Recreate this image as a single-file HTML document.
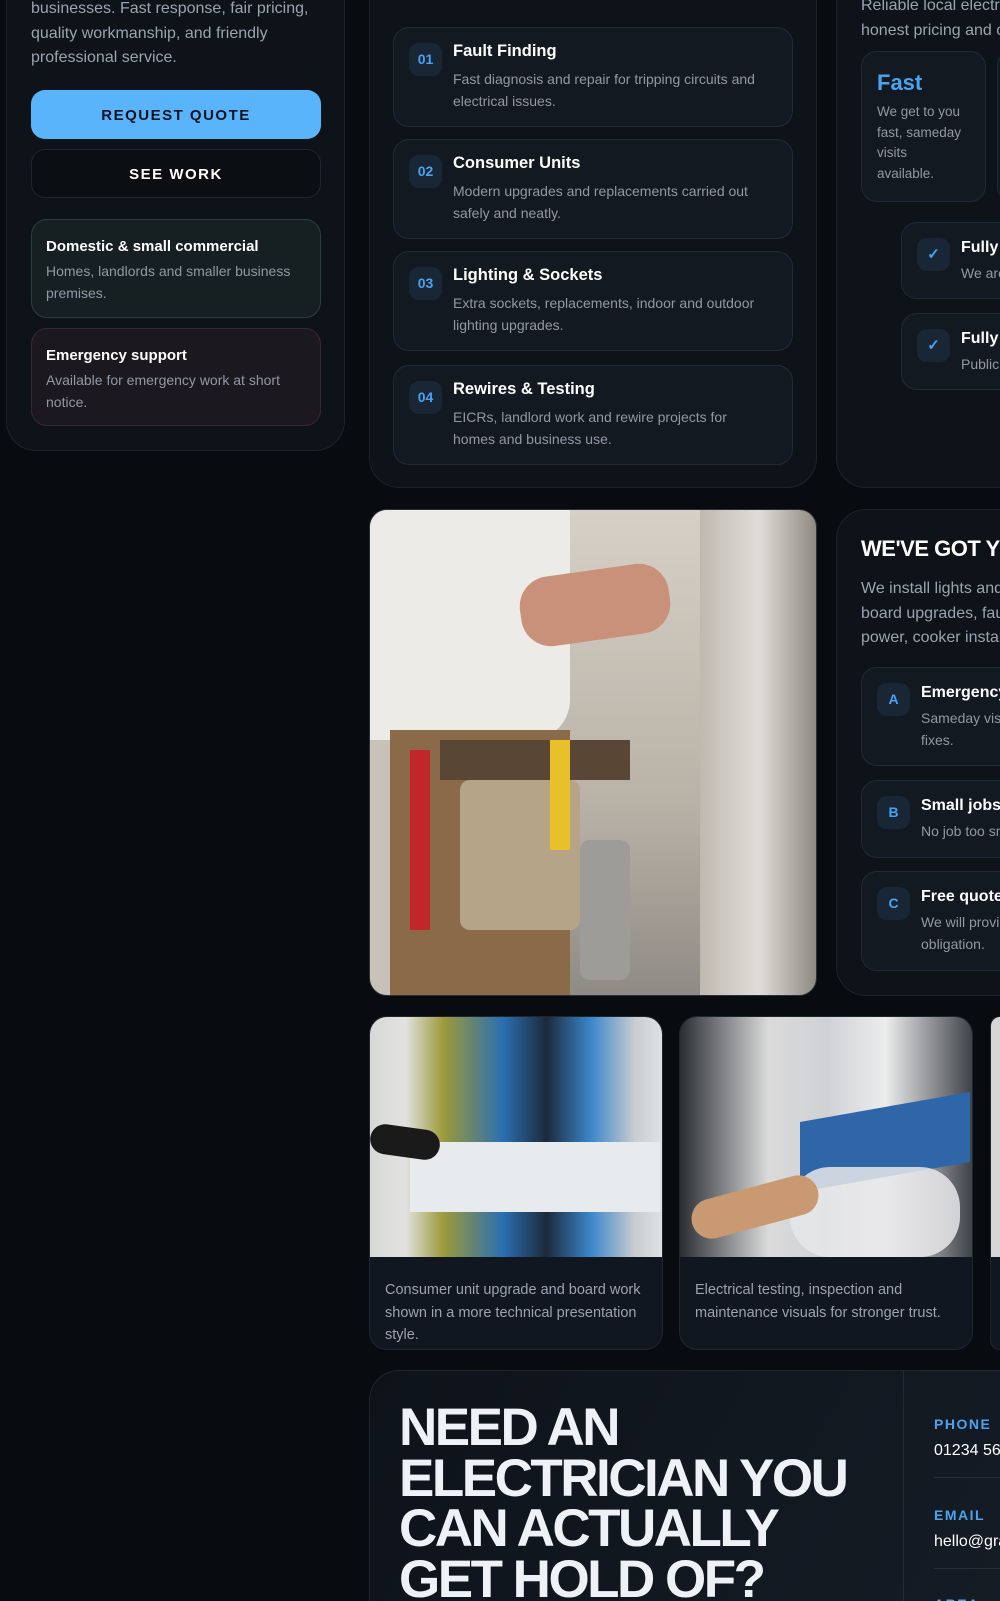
<!DOCTYPE html>
<html><head><meta charset="utf-8"><style>
*{margin:0;padding:0;box-sizing:border-box}
html,body{width:1000px;height:1601px;overflow:hidden;background:#080b10}
body{font-family:"Liberation Sans",Arial,sans-serif;position:relative;color:#fff}
#wrap{position:absolute;left:0;top:0;width:1000px;height:1601px;overflow:hidden}
.a{position:absolute}
.panel{position:absolute;background:#0e1319;border:1px solid #1c232c;border-radius:30px}
.p{color:#9aa3ae;font-size:16px;line-height:24.5px}
.btn{position:absolute;border-radius:14px;text-align:center;font-weight:900;font-size:15px;letter-spacing:1.5px}
.card{position:absolute;border-radius:16px;border:1px solid #222a34;background:#131921;overflow:hidden}
.card h4{font-size:15.5px;font-weight:700;color:#fff;margin-bottom:6px;white-space:nowrap}
.card p{font-size:14px;line-height:21.5px;color:#8f99a5}
.badge{position:absolute;width:33px;height:33px;border-radius:10px;background:#182635;color:#4aa3f0;font-weight:900;font-size:14px;text-align:center;line-height:33px}
.svc h4{position:absolute;left:59px;top:14px;font-size:16.5px}
.svc p{position:absolute;left:59px;top:41px;width:310px}
.gal{position:absolute;top:1016px;width:294px;height:334px;border-radius:18px;overflow:hidden;background:#111720;border:1px solid #1f2630}
.gal .cap{position:absolute;left:15px;top:262px;width:270px;font-size:14.5px;line-height:22.5px;color:#9aa3ae}
</style></head><body><div id="wrap">

<div class="panel" style="left:6px;top:-40px;width:339px;height:491px"></div>
<div class="a p" style="left:31px;top:-3px;width:300px">businesses. Fast response, fair pricing, quality workmanship, and friendly professional service.</div>
<div class="btn" style="left:31px;top:90px;width:290px;height:49px;background:#5ab4fb;color:#0a1320;line-height:51px">REQUEST QUOTE</div>
<div class="btn" style="left:31px;top:149px;width:290px;height:49px;border:1px solid #1f2630;background:#0b0f14;color:#fff;line-height:49px">SEE WORK</div>
<div class="card" style="left:31px;top:219px;width:290px;height:99px;background:#162022;border-color:#28403a">
<h4 style="position:absolute;left:14px;top:18px;font-size:15px">Domestic &amp; small commercial</h4>
<p style="position:absolute;left:14px;top:41px;width:265px">Homes, landlords and smaller business premises.</p></div>
<div class="card" style="left:31px;top:328px;width:290px;height:98px;background:#1c1820;border-color:#3e2630">
<h4 style="position:absolute;left:14px;top:18px;font-size:15px">Emergency support</h4>
<p style="position:absolute;left:14px;top:41px;width:265px">Available for emergency work at short notice.</p></div>

<div class="panel" style="left:369px;top:-40px;width:448px;height:528px"></div>
<div class="a p" style="left:393px;top:-18px;font-size:15px">Some of the services available from us.</div>
<div class="card svc" style="left:393px;top:27px;width:400px;height:100px"><div class="badge" style="left:15px;top:15px">01</div><h4>Fault Finding</h4><p>Fast diagnosis and repair for tripping circuits and electrical issues.</p></div>
<div class="card svc" style="left:393px;top:139px;width:400px;height:100px"><div class="badge" style="left:15px;top:15px">02</div><h4>Consumer Units</h4><p>Modern upgrades and replacements carried out safely and neatly.</p></div>
<div class="card svc" style="left:393px;top:251px;width:400px;height:100px"><div class="badge" style="left:15px;top:15px">03</div><h4>Lighting &amp; Sockets</h4><p>Extra sockets, replacements, indoor and outdoor lighting upgrades.</p></div>
<div class="card svc" style="left:393px;top:365px;width:400px;height:100px"><div class="badge" style="left:15px;top:15px">04</div><h4>Rewires &amp; Testing</h4><p style="width:300px">EICRs, landlord work and rewire projects for homes and business use.</p></div>

<div class="panel" style="left:836px;top:-40px;width:200px;height:528px"></div>
<div class="a p" style="left:861px;top:-6px;white-space:nowrap">Reliable local electrician<br>honest pricing and clear</div>
<div class="card" style="left:861px;top:51px;width:125px;height:151px">
<div class="a" style="left:15px;top:18px;color:#4aa3f0;font-size:22px;font-weight:700">Fast</div>
<div class="a" style="left:15px;top:50px;width:86px;font-size:13.5px;line-height:20.5px;color:#8f99a5">We get to you fast, sameday visits available.</div></div>
<div class="card" style="left:997px;top:51px;width:30px;height:151px"></div>
<div class="card" style="left:901px;top:222px;width:130px;height:77px"><div class="badge" style="left:15px;top:15px;font-size:15px">✓</div><h4 style="position:absolute;left:59px;top:16px;font-size:16px">Fully</h4><p style="position:absolute;left:59px;top:40px;white-space:nowrap">We are</p></div>
<div class="card" style="left:901px;top:313px;width:130px;height:77px"><div class="badge" style="left:15px;top:15px;font-size:15px">✓</div><h4 style="position:absolute;left:59px;top:16px;font-size:16px">Fully</h4><p style="position:absolute;left:59px;top:40px;white-space:nowrap">Public</p></div>

<div class="a" style="left:369px;top:509px;width:448px;height:487px;border-radius:18px;overflow:hidden;border:1px solid #2a3038;background:linear-gradient(90deg,#c9c2b8 0%,#bdb6aa 40%,#a69f95 70%,#6d6860 85%,#3a3a3a 100%)">
<div class="a" style="left:180px;top:0;width:150px;height:487px;background:linear-gradient(180deg,#d6d0c6,#b9b2a7 60%,#8f8a84)"></div>
<div class="a" style="left:0;top:0;width:200px;height:230px;background:#ecebe8;border-radius:0 0 40px 0"></div>
<div class="a" style="left:150px;top:60px;width:150px;height:70px;background:#c9917a;border-radius:30px;transform:rotate(-8deg)"></div>
<div class="a" style="left:20px;top:220px;width:180px;height:267px;background:#8a6a48"></div>
<div class="a" style="left:70px;top:230px;width:190px;height:40px;background:#5a4634"></div>
<div class="a" style="left:40px;top:240px;width:20px;height:180px;background:#c0262a"></div>
<div class="a" style="left:90px;top:270px;width:120px;height:150px;background:#b5a488;border-radius:10px"></div>
<div class="a" style="left:180px;top:230px;width:20px;height:110px;background:#e8c02a"></div>
<div class="a" style="left:210px;top:330px;width:50px;height:140px;background:#9e9c98;border-radius:10px"></div>
<div class="a" style="left:330px;top:0;width:118px;height:487px;background:linear-gradient(90deg,#bfb9b0,#e0ddd8,#8c877f)"></div>
</div>

<div class="panel" style="left:836px;top:509px;width:200px;height:487px"></div>
<div class="a" style="left:861px;top:536px;font-size:22px;font-weight:700;letter-spacing:-0.5px;white-space:nowrap">WE'VE GOT YOU</div>
<div class="a p" style="left:861px;top:577px;white-space:nowrap">We install lights and<br>board upgrades, fault<br>power, cooker install</div>
<div class="card" style="left:861px;top:667px;width:160px;height:99px"><div class="badge" style="left:15px;top:15px">A</div><h4 style="position:absolute;left:59px;top:16px;font-size:16px">Emergency</h4><p style="position:absolute;left:59px;top:40px;white-space:nowrap">Sameday visit<br>fixes.</p></div>
<div class="card" style="left:861px;top:780px;width:160px;height:78px"><div class="badge" style="left:15px;top:15px">B</div><h4 style="position:absolute;left:59px;top:16px;font-size:16px">Small jobs</h4><p style="position:absolute;left:59px;top:40px;white-space:nowrap">No job too sm</p></div>
<div class="card" style="left:861px;top:871px;width:160px;height:100px"><div class="badge" style="left:15px;top:15px">C</div><h4 style="position:absolute;left:59px;top:16px;font-size:16px">Free quote</h4><p style="position:absolute;left:59px;top:40px;white-space:nowrap">We will provi<br>obligation.</p></div>

<div class="gal" style="left:369px">
<div class="a" style="left:0;top:0;width:294px;height:240px;background:linear-gradient(90deg,#d8d8d6 0%,#e2e2e0 12%,#9c9a3a 25%,#2b6fb0 45%,#1c2a3c 60%,#3a86c8 75%,#c9ccd0 90%,#e0e3e6 100%)"></div>
<div class="a" style="left:40px;top:125px;width:250px;height:70px;background:#e8ebee"></div>
<div class="a" style="left:0;top:110px;width:70px;height:30px;background:#1a1a1a;border-radius:15px;transform:rotate(8deg)"></div>
<div class="cap">Consumer unit upgrade and board work shown in a more technical presentation style.</div></div>
<div class="gal" style="left:679px">
<div class="a" style="left:0;top:0;width:294px;height:240px;background:linear-gradient(90deg,#2a2e33 0%,#dadada 30%,#cfd2d5 50%,#ececec 70%,#3a3f46 100%)"></div>
<div class="a" style="left:120px;top:90px;width:170px;height:70px;background:#2f66a8;transform:skewY(-10deg)"></div>
<div class="a" style="left:110px;top:150px;width:170px;height:90px;background:#e7e8ea;border-radius:40px;opacity:.85"></div>
<div class="a" style="left:10px;top:170px;width:130px;height:40px;background:#c99a72;border-radius:20px;transform:rotate(-15deg)"></div>
<div class="cap">Electrical testing, inspection and maintenance visuals for stronger trust.</div></div>
<div class="gal" style="left:990px;width:10px;border-right:none;border-radius:18px 0 0 18px"><div class="a" style="left:0;top:0;width:10px;height:240px;background:#d5d5d5"></div></div>

<div class="a" style="left:369px;top:1370px;width:631px;height:260px;border-radius:30px 0 0 0;border:1px solid #1f2630;border-right:none;border-bottom:none;background:linear-gradient(120deg,#0e131a,#151c25)"></div>
<div class="a" style="left:903px;top:1371px;width:1px;height:240px;background:#222a34"></div>
<div class="a" style="left:399px;top:1403px;font-size:53px;line-height:50.5px;font-weight:700;letter-spacing:-2.5px;color:#eef2f7;white-space:nowrap">NEED AN<br>ELECTRICIAN YOU<br>CAN ACTUALLY<br>GET HOLD OF?</div>
<div class="a" style="left:934px;top:1416px;color:#4aa3f0;font-weight:900;font-size:14px;letter-spacing:1.5px">PHONE</div>
<div class="a" style="left:934px;top:1442px;font-size:16px;color:#fff;white-space:nowrap">01234 567890</div>
<div class="a" style="left:934px;top:1477px;width:66px;height:1px;background:#262e38"></div>
<div class="a" style="left:934px;top:1507px;color:#4aa3f0;font-weight:900;font-size:14px;letter-spacing:1.5px">EMAIL</div>
<div class="a" style="left:934px;top:1533px;font-size:16px;color:#fff;white-space:nowrap">hello@grant.co.uk</div>
<div class="a" style="left:934px;top:1568px;width:66px;height:1px;background:#262e38"></div>
<div class="a" style="left:934px;top:1596px;color:#4aa3f0;font-weight:900;font-size:14px;letter-spacing:1.5px">AREA</div>
</div></body></html>
